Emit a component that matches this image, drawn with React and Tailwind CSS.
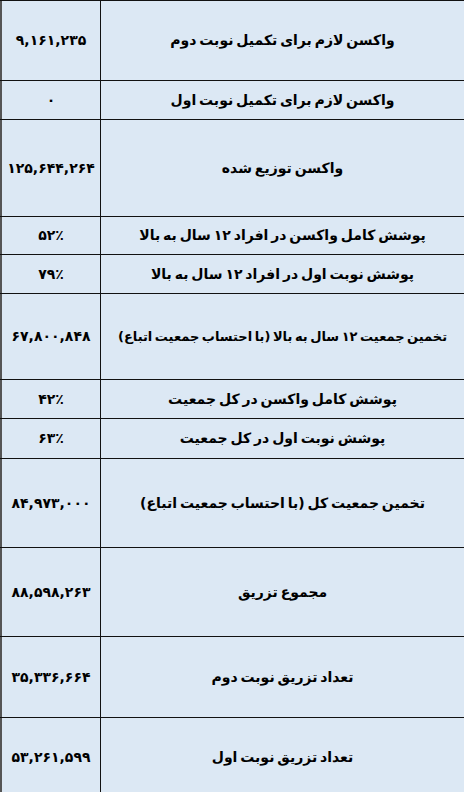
import React from 'react'

const rows = [
  { h: 'h-[80px]', num: '۹,۱۶۱,۲۳۵', label: 'واکسن لازم برای تکمیل نوبت دوم' },
  { h: 'h-[39px]', num: '۰', label: 'واکسن لازم برای تکمیل نوبت اول' },
  { h: 'h-[97px]', num: '۱۲۵,۶۴۴,۲۶۴', label: 'واکسن توزیع شده' },
  { h: 'h-[38px]', num: '۵۲٪', label: 'پوشش کامل واکسن در افراد ۱۲ سال به بالا' },
  { h: 'h-[39px]', num: '۷۹٪', label: 'پوشش نوبت اول در افراد ۱۲ سال به بالا' },
  { h: 'h-[86px]', num: '۶۷,۸۰۰,۸۴۸', label: 'تخمین جمعیت ۱۲ سال به بالا (با احتساب جمعیت اتباع)', small: true },
  { h: 'h-[39px]', num: '۴۲٪', label: 'پوشش کامل واکسن در کل جمعیت' },
  { h: 'h-[40px]', num: '۶۳٪', label: 'پوشش نوبت اول در کل جمعیت' },
  { h: 'h-[89px]', num: '۸۴,۹۷۳,۰۰۰', label: 'تخمین جمعیت کل (با احتساب جمعیت اتباع)' },
  { h: 'h-[89px]', num: '۸۸,۵۹۸,۲۶۳', label: 'مجموع تزریق' },
  { h: 'h-[81px]', num: '۳۵,۳۳۶,۶۶۴', label: 'تعداد تزریق نوبت دوم' },
  { h: 'h-[80px]', num: '۵۳,۲۶۱,۵۹۹', label: 'تعداد تزریق نوبت اول' },
]

export default function App() {
  return (
    <div className="w-[464px] h-[792px] overflow-hidden bg-[#dce8f4] font-['DejaVu_Sans',sans-serif] text-black">
      {rows.map((r, i) => (
        <div key={i} className={`flex ${r.h} border-t border-[#111]`}>
          <div
            dir="ltr"
            className="w-[101px] shrink-0 flex items-center justify-center border-l-2 border-l-[#555] border-r border-r-[#111] text-[14px] font-bold"
          >
            {r.num}
          </div>
          <div
            dir="rtl"
            className={`flex-1 flex items-center justify-center font-bold whitespace-nowrap [word-spacing:-2px] ${r.small ? 'text-[13px]' : 'text-[14px]'}`}
          >
            {r.label}
          </div>
        </div>
      ))}
    </div>
  )
}
